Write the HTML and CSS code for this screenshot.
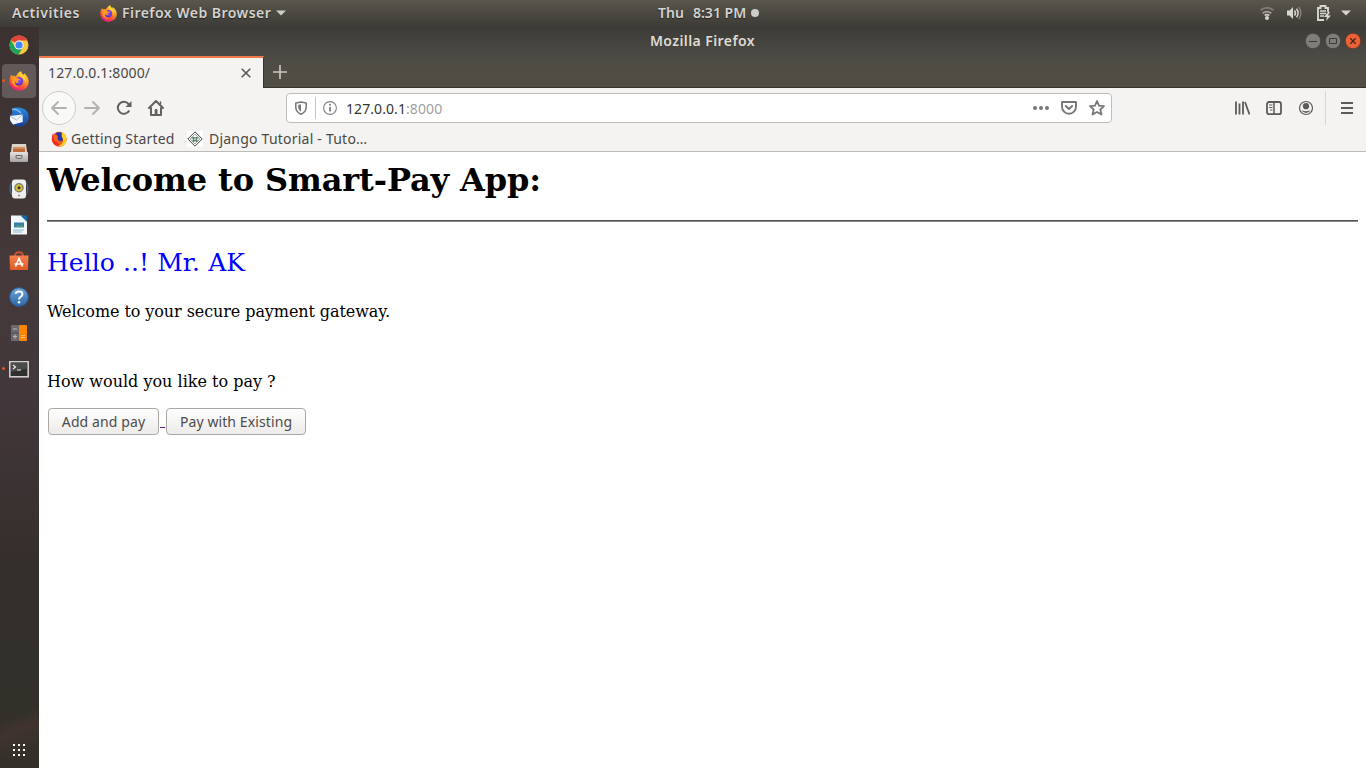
FILE: index.html
```html
<!DOCTYPE html>
<html lang="en">
<head>
<meta charset="utf-8">
<title>Smart-Pay</title>
<link rel="stylesheet" href="styles.css">
</head>
<body>
<svg width="0" height="0" class="defs" aria-hidden="true">
  <defs>
    <linearGradient id="flame" x1=".8" y1="0" x2=".3" y2="1"><stop offset="0" stop-color="#ffe83a"/><stop offset=".4" stop-color="#ff9a23"/><stop offset=".75" stop-color="#ff4540"/><stop offset="1" stop-color="#e3168a"/></linearGradient>
    <radialGradient id="globe" cx=".5" cy=".35" r=".7"><stop offset="0" stop-color="#9a54f5"/><stop offset="1" stop-color="#5330bd"/></radialGradient>
    <linearGradient id="sea" x1="0" y1="0" x2="0" y2="1"><stop offset="0" stop-color="#2d8be0"/><stop offset="1" stop-color="#153f94"/></linearGradient>
    <linearGradient id="metal" x1="0" y1="0" x2="0" y2="1"><stop offset="0" stop-color="#e5e4e2"/><stop offset="1" stop-color="#a5a4a2"/></linearGradient>
    <linearGradient id="bag" x1="0" y1="0" x2="0" y2="1"><stop offset="0" stop-color="#f5814c"/><stop offset="1" stop-color="#dd5a28"/></linearGradient>
    <linearGradient id="help" x1="0" y1="0" x2="0" y2="1"><stop offset="0" stop-color="#6da5da"/><stop offset="1" stop-color="#2d67a8"/></linearGradient>
    <symbol id="firefox" viewBox="0 0 20 20">
      <path fill="url(#flame)" d="M12 .3c.2 1.800 1.200 2.700 2.600 3.900 0-.8.100-1.300.400-1.900 3 1.900 4.700 5 4.700 8.400 0 5-4.200 9-9.500 9S.4 15.800.4 10.500c0-3 .8-5.300 2-6.900.2.700.5 1.100 1 1.500 1.200-.5 2.500-.3 3.600.3C8 3 9.500 1.200 12 .3z"/>
      <circle cx="10" cy="10.200" r="4.200" fill="url(#globe)"/>
      <path fill="#ff9a25" d="M3.400 6c2.200-.8 4 0 5.300 1.600l2.300.3c-.2 1-1.700 1.300-2.100 1.900-.3.700.1 1.600 1 2-1.500.5-3-.1-4.200-1.400-.3 2.900 1.500 5.300 4.900 5.700-4.600.7-7.900-2.800-7.900-6.200 0-1.500.2-2.800.7-3.900z"/>
      <path fill="#ffd13b" d="M12 .3c.2 2 1.500 3 2.900 4.300 1.900 1.800 2.300 4.500 1.400 7.200-.4-3-1.900-4.600-3.800-5.800C10.800 4.800 10.400 2 12 .3z"/>
    </symbol>
  </defs>
</svg>

<header class="topbar">
  <span class="activities">Activities</span>
  <div class="appmenu">
    <svg class="appicon" width="17" height="17"><use href="#firefox"/></svg>
    <span class="appname">Firefox Web Browser</span>
    <svg width="10" height="6"><path d="M0 .5h10L5 5.500z" fill="#ccc"/></svg>
  </div>
  <div class="clock"><span class="day">Thu</span><span class="time">8:31 PM</span><i class="dot"></i></div>
  <div class="tray">
    <svg width="16" height="16" viewBox="0 0 16 16" fill="none"><path d="M1.500 5.300q6.500-5 13 0" stroke="#7b7972" stroke-width="2"/><path d="M3.700 8.300q4.300-3.200 8.600 0" stroke="#a6a49e" stroke-width="1.800"/><path d="M5.600 10.400q2.400-1.500 4.800 0" stroke="#d5d3ce" stroke-width="1.600"/><circle cx="8" cy="13" r="2" fill="#d8d6d0"/></svg>
    <svg width="16" height="16" viewBox="0 0 16 16" fill="none"><path d="M0 5.500h2.500L6 2v12l-3.500-3.500H0z" fill="#d8d6d0"/><path d="M7.500 5.500q2 2.500 0 5M9.500 3.700q3.200 4.300 0 8.600" stroke="#d8d6d0" stroke-width="1.500"/><path d="M11.700 2q4.400 6 0 12" stroke="#85837c" stroke-width="1.400"/></svg>
    <svg width="16" height="16" viewBox="0 0 16 16" fill="none"><path d="M9 15H3V3h2.500V1h5v2H13v4" stroke="#d8d6d0" stroke-width="1.900"/><path d="M5 6h6M5 8.500h6M5 11h4" stroke="#d8d6d0" stroke-width="1.400"/><path d="M13 7 9 12h3l-1 4 5-5.500h-3L15 7z" fill="#d8d6d0"/></svg>
    <svg class="traymenu" width="10" height="6"><path d="M0 .5h10L5 5.500z" fill="#d5d3ce"/></svg>
  </div>
</header>

<div class="desktop">
  <nav class="dock">
    <div class="launcher"><svg width="20" height="20" viewBox="0 0 20 20"><circle cx="10" cy="10" r="9.500" fill="#fbc83c"/><path d="M10 10 1.800 5.200A9.500 9.500 0 0 1 18.300 5.500H10z" fill="#de463a"/><path d="M1.800 5.200A9.500 9.500 0 0 0 9.500 19.500L14 12.200 10 10 6 12z" fill="#1fa35c"/><circle cx="10" cy="10" r="4.600" fill="#f5f5f5"/><circle cx="10" cy="10" r="3.600" fill="#4285f4"/></svg></div>
    <div class="launcher running active"><svg width="20" height="20"><use href="#firefox"/></svg></div>
    <div class="launcher"><svg width="20" height="20" viewBox="0 0 20 20"><path fill="url(#sea)" d="M3 2C7-.3 12 .2 15 2c3 1.500 5 4 4.700 9-.5 5-5 9-10.200 8.500C4 19 1 15.500.5 12c.6-1 .2-1.500.5-3L3.500 6z"/><path d="m1 9 12.500-1.500L13.800 15 4 17.500 1 13z" fill="#f4f7fa"/><path d="m1 9 6.500 4 6-5.300" fill="none" stroke="#abc0d3"/><path d="M3 2.500c4-1 6 0 9 3.500" stroke="#77b9ef" stroke-width="1.500" fill="none"/></svg></div>
    <div class="launcher"><svg width="20" height="20" viewBox="0 0 20 20"><path d="M3 1h14l1 8H2z" fill="#d9d4cc"/><path d="M4 4h12v6H4z" fill="#bd6a37"/><path d="M4 5h12" stroke="#efb37c"/><rect x="1" y="9" width="18" height="10" rx="1" fill="url(#metal)"/><path d="M7 12.500h6v1.500q0 1.500-1.500 1.500h-3Q7 15.500 7 14z" fill="none" stroke="#686764"/></svg></div>
    <div class="launcher"><svg width="20" height="20" viewBox="0 0 20 20"><path d="M3 3.500Q-.8 10 3 16M17 3.500q3.800 6.500 0 12.500" stroke="#536c88" stroke-width="1.300" fill="none"/><rect x="3" y=".5" width="14" height="19" rx="3" fill="#eeeeec"/><circle cx="10" cy="8.800" r="4.700" fill="#77766b"/><circle cx="10" cy="8.800" r="3.500" fill="#d1bd38"/><circle cx="10" cy="8.800" r="1.500" fill="#383832"/><circle cx="10" cy="16.500" r="1" fill="#888"/></svg></div>
    <div class="launcher"><svg width="20" height="20" viewBox="0 0 20 20"><path d="M2 .5h11l5 5v14H2z" fill="#f4f7f9"/><path d="M11.500 .5H18V7z" fill="#126da5"/><rect x="5" y="7.500" width="10" height="5" fill="#387eaa"/><path d="M6 12 9 9.500l2 2 2-2 1.500 2.500" fill="#4da27d"/><path d="M4 15h11M4 17h9" stroke="#88b8d3"/></svg></div>
    <div class="launcher"><svg width="20" height="20" viewBox="0 0 20 20"><path d="M6 5C6 0 14 0 14 5" fill="none" stroke="#c75431" stroke-width="2"/><path d="M.5 4.500h19L19 19H1z" fill="url(#bag)"/><path d="m6.500 15.500 3.500-8 3.500 8M5.500 13h9" fill="none" stroke="#fff" stroke-width="1.600"/></svg></div>
    <div class="launcher"><svg width="20" height="20" viewBox="0 0 20 20"><circle cx="10" cy="10" r="9.300" fill="url(#help)" stroke="#2b609b"/><path d="M6.500 6.800Q7.200 4.500 10 4.500c4.500 0 4.200 4 1.500 5.500Q10 11 10 12.600" fill="none" stroke="#fff" stroke-width="2"/><circle cx="10" cy="15.300" r="1.300" fill="#fff"/></svg></div>
    <div class="launcher"><svg width="20" height="20" viewBox="0 0 20 20"><rect x="2" y="2" width="8" height="16" rx="1" fill="#6c6a70"/><rect x="10" y="2" width="8" height="16" rx="1" fill="#ff8500"/><path d="M2 10h8" stroke="#504e54"/><path d="M4 6h4M4 13.500h4M6 11.500v4" stroke="#b7b5b9" stroke-width="1.200"/><path d="M12 12.500h4M12 14.500h4" stroke="#ffc179"/></svg></div>
    <div class="launcher running"><svg width="20" height="20" viewBox="0 0 20 20"><rect x=".8" y="2.800" width="18.400" height="15" fill="#30302e" stroke="#cfcecb" stroke-width="1.600"/><path d="M2 3.500h16v6L2 13z" fill="#4b4b49"/><path d="m4 6 2.500 2L4 10M8 11h4" stroke="#eee" stroke-width="1.200" fill="none"/></svg></div>
    <div class="apps"><svg width="14" height="14" viewBox="0 0 14 14" fill="#fff"><path d="M1 1h2v2H1zM6 1h2v2H6zM11 1h2v2h-2zM1 6h2v2H1zM6 6h2v2H6zM11 6h2v2h-2zM1 11h2v2H1zM6 11h2v2H6zM11 11h2v2h-2z"/></svg></div>
  </nav>

  <div class="window">
    <div class="titlebar">
      <span class="wintitle">Mozilla Firefox</span>
      <div class="controls">
        <svg width="16" height="16" viewBox="0 0 16 16"><circle cx="8" cy="8" r="7.700" fill="#7f7d77" stroke="#393732" stroke-width=".6"/><path d="M4 8.500h8" stroke="#3c3b37"/></svg>
        <svg width="16" height="16" viewBox="0 0 16 16"><circle cx="8" cy="8" r="7.700" fill="#7f7d77" stroke="#393732" stroke-width=".6"/><path d="M4.500 5.500h7v5h-7z" fill="none" stroke="#3c3b37"/></svg>
        <svg width="16" height="16" viewBox="0 0 16 16"><circle cx="8" cy="8" r="7.700" fill="#ed6136" stroke="#5a2e20" stroke-width=".6"/><path d="m5.300 5.300 5.400 5.400m0-5.400-5.400 5.400" stroke="#47251a" stroke-width="1.300"/></svg>
      </div>
    </div>
    <div class="tabs">
      <div class="tab"><span class="tabtitle">127.0.0.1:8000/</span><svg width="10" height="10"><path d="m.7.7 8.600 8.600m0-8.600L.7 9.300" stroke="#5b5a57" stroke-width="1.600"/></svg></div>
      <svg class="newtab" width="14" height="14"><path d="M7 0v14M0 7h14" stroke="#c9c7c2" stroke-width="1.700"/></svg>
    </div>
    <div class="toolbar">
      <div class="back"><svg width="16" height="16" viewBox="0 0 16 16" fill="none" stroke="#b2b1af" stroke-width="1.800" stroke-linecap="round" stroke-linejoin="round"><path d="M15 8H1m6-6L1 8l6 6"/></svg></div>
      <svg class="fwd" width="16" height="16" viewBox="0 0 16 16" fill="none" stroke="#b2b1af" stroke-width="1.800" stroke-linecap="round" stroke-linejoin="round"><path d="M1 8h14M9 2l6 6-6 6"/></svg>
      <svg class="reload" width="16" height="16" viewBox="0 0 16 16" fill="none"><path d="M13.200 10.500A6 6 0 1 1 12.500 4l1 1.500" stroke="#63625f" stroke-width="2"/><path d="M15.500 1v6h-6z" fill="#63625f"/></svg>
      <svg class="home" width="16" height="16" viewBox="0 0 16 16" fill="none" stroke="#63625f" stroke-width="2" stroke-linejoin="round" stroke-linecap="round"><path d="m1 8 7-7 7 7M3 8v7h10V8"/><path d="M7.800 14.500V10h.6v4.500" stroke-width="2.200"/><path d="M12.500 2v2" stroke-width="1.500"/></svg>
      <div class="urlbar">
        <svg class="shield" width="12" height="14" viewBox="0 0 12 14"><path d="M6 .9 11.200 2v4.500Q11 11 6 13.200 1 11 .8 6.500V2z" fill="none" stroke="#777" stroke-width="1.500"/><path d="M6 3.300v7.200Q3.300 9 3.200 6.500V4z" fill="#777"/></svg>
        <i class="urldivider"></i>
        <svg width="14" height="14" viewBox="0 0 14 14"><circle cx="7" cy="7" r="6.400" fill="none" stroke="#818181" stroke-width="1.100"/><path d="M7 6v4.500" stroke="#777" stroke-width="1.700"/><circle cx="7" cy="3.800" r="1" fill="#777"/></svg>
        <span class="url">127.0.0.1<span class="port">:8000</span></span>
        <svg class="dots" width="16" height="6" fill="#777"><circle cx="2" cy="3" r="2"/><circle cx="8" cy="3" r="2"/><circle cx="14" cy="3" r="2"/></svg>
        <svg class="pocket" width="16" height="14" viewBox="0 0 16 14" fill="none" stroke="#777" stroke-width="1.900" stroke-linecap="round" stroke-linejoin="round"><path d="M1 1h14v4.500a7 7.300 0 0 1-14 0zM4.800 5 8 8l3.200-3"/></svg>
        <svg width="16" height="16" viewBox="0 0 16 16" fill="none" stroke="#777" stroke-width="1.800" stroke-linejoin="round"><path d="m8 1 2 4.600 5 .5-3.700 3.400 1.200 5L8 12l-4.500 2.500 1.200-5L1 6.100l5-.5z"/></svg>
      </div>
      <div class="actions">
        <svg width="16" height="16" fill="none" stroke="#5c5b58" stroke-width="1.800"><path d="M2 1.500v13M5.500 3.500v11M9 1.500v13M11 2l4.500 12.500"/></svg>
        <svg width="16" height="16" fill="none" stroke="#5c5b58" stroke-width="1.800"><rect x="1" y="2" width="14" height="12.200" rx="2"/><path d="M8 2v12" stroke-width="1.500"/><path d="M3 5h3.500M3 7.500h3.500M4 10h2.500" stroke-width="1"/></svg>
        <svg width="16" height="16"><circle cx="8" cy="8" r="6.500" fill="none" stroke="#5c5b58" stroke-width="1.200"/><circle cx="8" cy="6.200" r="3.100" fill="#5c5b58"/><path d="M3.500 10.300Q8 12 12.500 10.300 11 13 8 13t-4.500-2.700z" fill="#5c5b58"/></svg>
      </div>
      <div class="menu"><svg width="12" height="12"><path d="M0 1h12M0 6h12M0 11h12" stroke="#5c5b58" stroke-width="1.900"/></svg></div>
    </div>
    <div class="bookmarks">
      <svg width="16" height="16"><circle cx="8.200" cy="8.200" r="7.500" fill="#f5541f"/><path d="M2 2q-3 8 3 12l4 1-5-7z" fill="#f52222"/><circle cx="8" cy="6" r="4.700" fill="#2933ae"/><path d="M11 1q6 4 4 10-2 5-8 4.200 6-2.200 5-7.200-2-2-1-7z" fill="#ffd51b"/><path d="M2 4q3-2 5 1.500L6.500 8q1 2.500 3.500 2-2 3-5 1T2 4z" fill="#f56419"/></svg>
      <span class="started">Getting Started</span>
      <svg class="tuto" width="16" height="16" fill="none"><path fill="#fff" d="M0 0h16v16H0z"/><path d="m8 .8 7.200 7.200L8 15.200.8 8z" stroke="#3e4340"/><path d="m8 3.200 4.800 4.800L8 12.800 3.200 8z" stroke="#777d79" stroke-width=".8"/><path d="M4.500 6.800h7M5.500 9.500h5M6.500 6v5M9.500 6v5" stroke="#5b846c" stroke-width="1.300"/></svg>
      <span class="django">Django Tutorial - Tuto…</span>
    </div>
    <main class="page">
      <h1>Welcome to Smart-Pay App:</h1>
      <hr>
      <p class="hello">Hello ..! Mr. AK</p>
      <p class="welcome">Welcome to your secure payment gateway.</p>
      <p class="question">How would you like to pay ?</p>
      <div class="choices"><button class="add">Add and pay</button><a href="#" class="gap">&nbsp;</a><button class="existing">Pay with Existing</button></div>
    </main>
  </div>
</div>
</body>
</html>
```

FILE: styles.css
```css
* { box-sizing: border-box; }
body { margin: 0; width: 1366px; height: 768px; overflow: hidden; display: flex; flex-direction: column; font: 14px/20px "Noto Sans", sans-serif; color: #4a4947; background: #fff; }
svg { display: block; flex: none; }
span { white-space: nowrap; }
.defs { position: absolute; }

.topbar { height: 27px; flex: none; display: grid; grid-template-columns: 100px 558px 1fr auto; align-items: center; padding-bottom: 1px; background: linear-gradient(#5a564d, #3d3b37); color: #d5d3cf; font-weight: 600; font-size: 14px; text-shadow: 0 1px 1px #222; }
.activities { padding-left: 12px; letter-spacing: .55px; }
.appmenu { display: flex; align-items: center; }
.appname { margin-left: 5px; width: 150px; margin-right: 4px; letter-spacing: .47px; }
.clock { display: flex; align-items: center; }
.day { width: 35px; }
.time { width: 58px; }
.dot { width: 8px; height: 8px; border-radius: 50%; background: #d0cecb; }
.tray { display: flex; align-items: center; gap: 12px; padding-right: 15px; }
.traymenu { margin-left: -2px; }

.desktop { flex: 1; display: flex; min-height: 0; }
.dock { width: 39px; flex: none; display: flex; flex-direction: column; background: linear-gradient(160deg, transparent 0 92%, #41332f 94%, transparent 97%), linear-gradient(#3b3130 0, #45393a 33%, #42373a 50%, #352f2c 72%, #32302b 85%, #343029 100%); }
.launcher { width: 34px; height: 34px; margin: 1px 0 1px 2px; border-radius: 4px; display: flex; align-items: center; justify-content: center; position: relative; }
.active { background: #625958; }
.running::before { content: ""; position: absolute; left: 0; top: 15px; width: 3px; height: 3px; border-radius: 50%; background: #e95420; }
.apps { margin: auto 0 11px 12px; }

.window { flex: 1; min-width: 0; display: flex; flex-direction: column; background: #fff; }
.titlebar { height: 29px; display: grid; grid-template-columns: 1fr auto 1fr; align-items: center; background: linear-gradient(#3c3b37, #4c4a44); color: #dfdbd2; font-weight: 600; }
.titlebar { padding-bottom: 2px; }
.wintitle { grid-column: 2; letter-spacing: .42px; }
.controls { display: flex; gap: 4px; justify-content: flex-end; padding: 1px 5px 0 0; }
.tabs { height: 32px; display: flex; align-items: center; background: linear-gradient(#4c4a44, #504d45 40%); border-bottom: 1px solid #36342f; }
.tab { width: 225px; height: 32px; margin-bottom: -1px; display: flex; align-items: center; justify-content: space-between; padding: 0 12px 1px 9px; background: #f4f3f2; border-top: 2px solid #f07746; border-right: 1px solid #36342f; }
.tabtitle { letter-spacing: .12px; }
.newtab { margin-left: 9px; }
.toolbar { height: 40px; display: flex; align-items: center; background: #f4f3f2; padding-left: 3px; }
.back { width: 34px; height: 34px; border: 1px solid #cfcdca; border-radius: 50%; background: #f9f9f8; display: grid; place-items: center; }
.fwd { margin-left: 8px; }
.reload, .home { margin-left: 16px; }
.urlbar { width: 826px; height: 30px; margin-left: 122px; display: flex; align-items: center; background: #fff; border: 1px solid #bfbdba; border-radius: 4px; padding: 0 6px 0 8px; }
.urldivider { width: 1px; height: 22px; background: #c5c3c0; margin: 0 7px 0 8px; }
.url { margin-left: 9px; padding-top: 2px; color: #353432; letter-spacing: .08px; }
.port { color: #a09f9d; }
.dots { margin-left: auto; }
.pocket, .pocket + svg { margin-left: 12px; }
.actions { display: flex; gap: 16px; margin-left: 122px; }
.menu { height: 34px; margin-left: 11px; padding-left: 15px; border-left: 1px solid #d8d6d3; display: flex; align-items: center; }
.bookmarks { height: 24px; display: flex; align-items: center; padding: 0 0 2px 12px; background: #f4f3f2; border-bottom: 1px solid #bdbbb8; }
.started { width: 104px; margin-left: 4px; letter-spacing: .2px; }
.tuto { margin-left: 12px; }
.django { margin-left: 6px; letter-spacing: .22px; }

.page { padding: 10px 8px 8px; color: #000; font: 16px/19px "DejaVu Serif", serif; }
.page h1 { font-size: 32px; line-height: 37px; margin: 0 0 21px; letter-spacing: -.12px; }
.page hr { height: 2px; margin: 0; border: 0; border-top: 1px solid #555; background: #888; }
.page p { margin: 0; }
.page .hello { font-size: 25px; line-height: 30px; margin-top: 26px; color: #00f; letter-spacing: .07px; }
.page .welcome { margin-top: 24px; letter-spacing: -.08px; }
.page .question { margin-top: 51px; }
.choices { display: flex; margin: 17px 0 0 1px; height: 27px; }
button { height: 27px; padding: 0; border: 1px solid #aaa8a5; border-radius: 4px; background: linear-gradient(#fff, #edebe9); font: 14px/20px "Noto Sans", sans-serif; letter-spacing: .1px; color: #4c4c4c; white-space: nowrap; }
.add { width: 111px; }
.existing { width: 140px; }
.gap { width: 7px; padding-left: 1px; line-height: 26px; color: #551a8b; }
```
